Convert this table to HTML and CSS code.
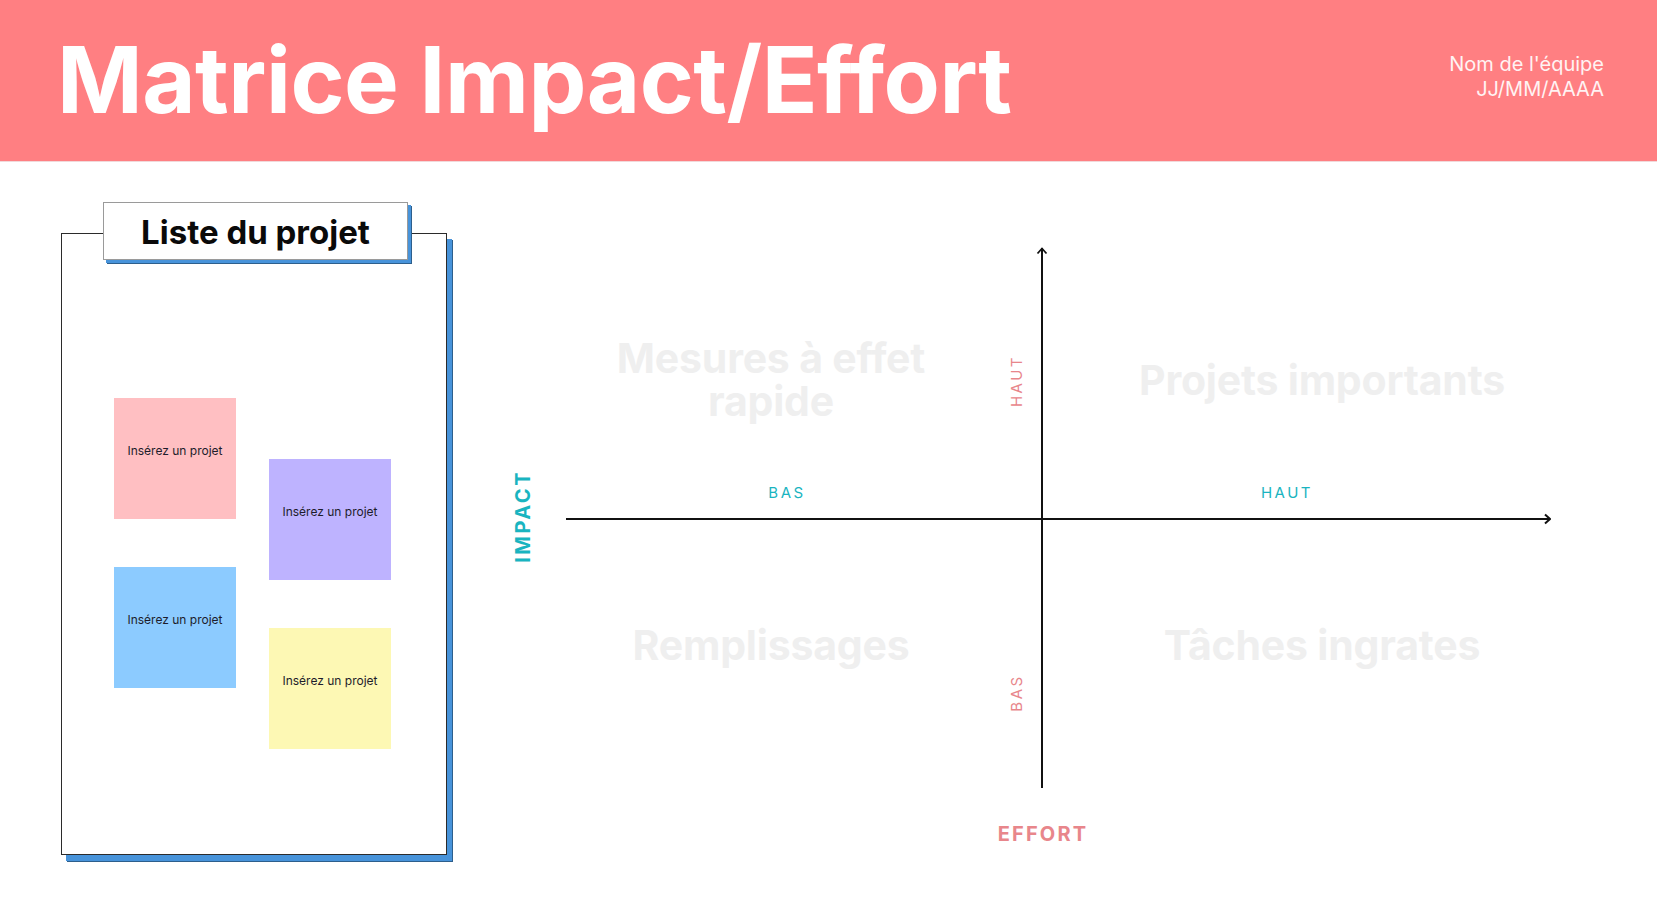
FILE: index.html
```html
<!DOCTYPE html>
<html lang="fr">
<head>
<meta charset="utf-8">
<title>Matrice Impact/Effort</title>
<link rel="stylesheet" href="styles.css">
</head>
<body>
<header class="header">
  <h1 class="title">Matrice Impact/Effort</h1>
  <div class="meta">
    <div>Nom de l'équipe</div>
    <div>JJ/MM/AAAA</div>
  </div>
</header>
<main class="board">
  <section class="list-panel">
    <div class="card">
      <div class="card-title">Liste du projet</div>
      <div class="stickies">
        <div class="sticky-col">
          <div class="sticky sticky-pink">Insérez un projet</div>
          <div class="sticky sticky-blue">Insérez un projet</div>
        </div>
        <div class="sticky-col sticky-col-offset">
          <div class="sticky sticky-purple">Insérez un projet</div>
          <div class="sticky sticky-yellow">Insérez un projet</div>
        </div>
      </div>
    </div>
  </section>
  <section class="matrix">
    <div class="axis-impact">IMPACT</div>
    <div class="plot">
      <div class="quad quad-tl"><span>Mesures à effet<br>rapide</span></div>
      <div class="quad quad-tr"><span>Projets importants</span></div>
      <div class="quad quad-bl"><span>Remplissages</span></div>
      <div class="quad quad-br"><span>Tâches ingrates</span></div>
      <svg class="axes" width="985" height="541" viewBox="0 0 985 541" aria-hidden="true">
        <line x1="476" y1="1" x2="476" y2="541" stroke="#111" stroke-width="2"/>
        <polyline points="471.5,6.5 476,1.5 480.5,6.5" fill="none" stroke="#111" stroke-width="1.8"/>
        <line x1="0" y1="272" x2="984" y2="272" stroke="#111" stroke-width="2"/>
        <polyline points="979,267.5 984,272 979,276.5" fill="none" stroke="#111" stroke-width="2"/>
      </svg>
      <span class="tick tick-h tick-bas-h">BAS</span>
      <span class="tick tick-h tick-haut-h">HAUT</span>
      <span class="tick tick-v tick-haut-v">HAUT</span>
      <span class="tick tick-v tick-bas-v">BAS</span>
    </div>
    <div class="axis-effort">EFFORT</div>
  </section>
</main>
</body>
</html>
```
FILE: styles.css
```css
* { box-sizing: border-box; }
html, body {
  margin: 0;
  padding: 0;
  background: #ffffff;
  font-family: Inter, "Noto Sans", "Liberation Sans", sans-serif;
}
body {
  width: 1657px;
  height: 921px;
  overflow: hidden;
}

/* Header */
.header {
  height: 162px;
  background: #ff7f82;
  display: flex;
  justify-content: space-between;
  align-items: flex-start;
  padding: 0 53px 0 58px;
  border-bottom: 1px solid #f1d9da;
}
.title {
  margin: 34px 0 0 -1px;
  font-size: 92px;
  line-height: 1;
  font-weight: 700;
  color: #ffffff;
  letter-spacing: -0.5px;
}
.meta {
  margin-top: 52px;
  text-align: right;
  color: #fff3f3;
  font-size: 20px;
  line-height: 25px;
  font-weight: 400;
}

/* Board */
.board {
  display: flex;
  align-items: flex-start;
  padding: 40px 0 0 61px;
}

/* Project list */
.list-panel {
  width: 386px;
  flex: none;
}
.card {
  margin-top: 31px;
  height: 622px;
  border: 1px solid #2b2b2b;
  background: #ffffff;
  box-shadow: 5px 6px 0 0 #4793da, 6px 7px 0 0 #2d5f8c;
}
.card-title {
  position: relative;
  margin: -32px 0 0 41px;
  width: 305px;
  height: 58px;
  border: 1px solid #9a9a9a;
  background: #ffffff;
  box-shadow: 3px 3px 0 0 #4793da, 4px 4px 0 0 #2d5f8c;
  display: flex;
  align-items: center;
  justify-content: center;
  font-size: 33px;
  font-weight: 700;
  color: #0a0a0a;
  padding-top: 2px;
}
.stickies {
  display: flex;
  gap: 33px;
  padding-left: 52px;
}
.sticky-col {
  display: flex;
  flex-direction: column;
  gap: 48px;
  margin-top: 138px;
}
.sticky-col-offset {
  margin-top: 199px;
}
.sticky {
  width: 122px;
  height: 121px;
  display: flex;
  align-items: center;
  justify-content: center;
  padding-bottom: 16px;
  font-size: 12px;
  color: #1d1d2b;
}
.sticky-pink { background: #ffbfc2; }
.sticky-purple { background: #beb3ff; }
.sticky-blue { background: #8ccbff; }
.sticky-yellow { background: #fdf8b4; }

/* Matrix */
.matrix {
  margin: 45px 0 0 56px;
  display: grid;
  grid-template-columns: 40px 985px;
  grid-template-rows: 541px auto;
  column-gap: 23px;
}
.axis-impact {
  grid-column: 1;
  grid-row: 1;
  align-self: center;
  justify-self: center;
  writing-mode: vertical-rl;
  transform: rotate(180deg);
  font-size: 20px;
  line-height: 24px;
  font-weight: 700;
  letter-spacing: 2.5px;
  color: #19b4c0;
  padding-top: 2px;
}
.axis-effort {
  grid-column: 2;
  grid-row: 2;
  margin-top: 34px;
  padding-right: 31px;
  text-align: center;
  font-size: 20px;
  line-height: 24px;
  font-weight: 700;
  letter-spacing: 2.2px;
  color: #e8868b;
}
.plot {
  grid-column: 2;
  grid-row: 1;
  position: relative;
  display: grid;
  grid-template-columns: 476px 509px;
  grid-template-rows: 272px 269px;
}
.axes {
  position: absolute;
  left: 0;
  top: 0;
}
.quad {
  display: flex;
  align-items: center;
  justify-content: center;
  text-align: center;
  font-size: 41px;
  line-height: 43px;
  font-weight: 700;
  letter-spacing: -0.2px;
  color: #efefef;
}
.quad-tl { padding: 0 66px 6px 0; }
.quad-tr { padding: 0 0 6px 51px; }
.quad-bl { padding: 0 66px 16px 0; }
.quad-br { padding: 0 0 16px 51px; }

.tick {
  position: absolute;
  font-size: 15px;
  line-height: 18px;
  letter-spacing: 2.5px;
  font-weight: 400;
  transform: translate(-50%, -50%);
}
.tick-h { color: #19b4c0; }
.tick-v {
  color: #e8868b;
  writing-mode: vertical-rl;
  transform: translate(-50%, -50%) rotate(180deg);
}
.tick-bas-h { left: 221px; top: 246px; }
.tick-haut-h { left: 721px; top: 246px; }
.tick-haut-v { left: 451px; top: 134px; }
.tick-bas-v { left: 451px; top: 446px; }
```
